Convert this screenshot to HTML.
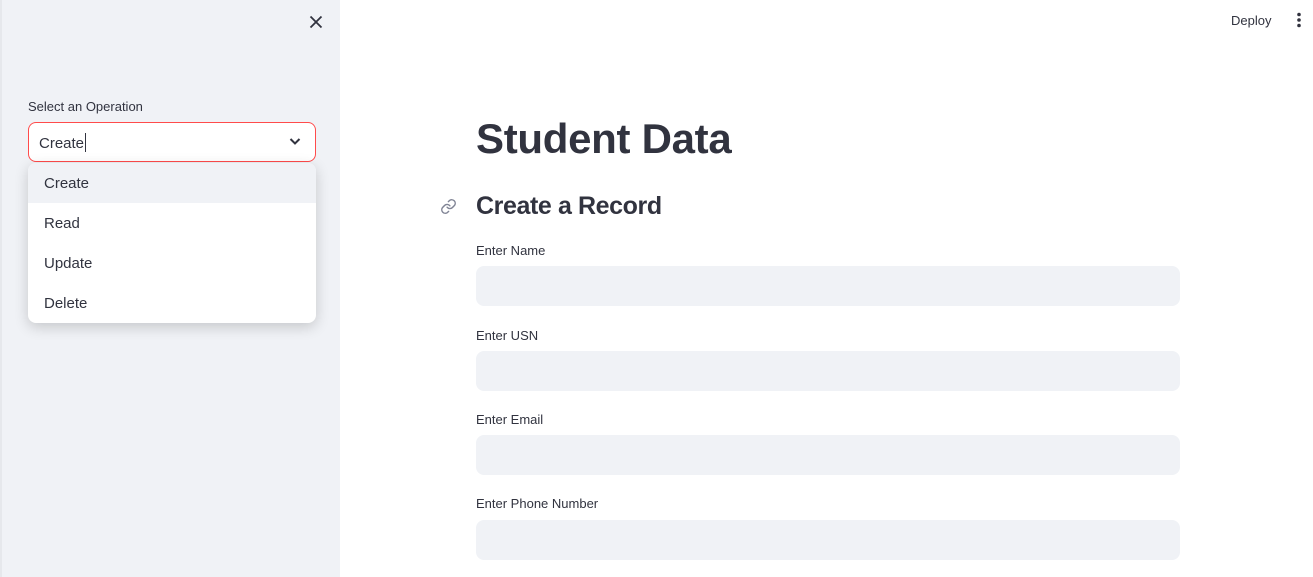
<!DOCTYPE html>
<html><head><style>
*{margin:0;padding:0;box-sizing:border-box}
body{width:1313px;height:577px;overflow:hidden;background:#fff;font-family:"Liberation Sans",sans-serif;color:#31333f;position:relative}
.sb{position:absolute;left:0;top:0;width:340px;height:577px;background:#f0f2f6;border-left:2px solid #e6e8ec}
.abs{position:absolute}
.lbl{font-size:13px;color:#31333f}
.inp{position:absolute;left:476px;width:704px;height:40px;background:#f0f2f6;border-radius:8px}
.menu{position:absolute;left:28px;top:163px;width:288px;height:160px;background:#fff;border-radius:8px;box-shadow:0 4px 14px rgba(0,0,0,.18);overflow:hidden}
.menu div{height:40px;line-height:40px;padding-left:16px;font-size:15px}
</style></head><body>
<div class="sb"></div>
<svg class="abs" style="left:309px;top:15px" width="14" height="14" viewBox="0 0 14 14"><path d="M1.5 1.5L12.5 12.5M12.5 1.5L1.5 12.5" stroke="#31333f" stroke-width="1.8"/></svg>
<div class="abs lbl" style="left:28px;top:99px">Select an Operation</div>
<div class="abs" style="left:28px;top:122px;width:288px;height:40px;border:1px solid #ff4b4b;border-radius:8px;background:#fff"></div>
<div class="abs" style="left:39px;top:133px;font-size:15px">Create<span style="display:inline-block;width:1px;height:19px;background:#31333f;vertical-align:-4px;margin-left:1px"></span></div>
<svg class="abs" style="left:289px;top:137px" width="12" height="9" viewBox="0 0 12 9"><path d="M1.5 2L6 6.5L10.5 2" stroke="#31333f" stroke-width="2" fill="none"/></svg>
<div class="menu"><div style="background:#f0f2f6;line-height:41px">Create</div><div style="line-height:41px">Read</div><div style="line-height:41px">Update</div><div style="line-height:41px">Delete</div></div>
<div class="abs" style="left:1231px;top:13px;font-size:13px">Deploy</div>
<svg class="abs" style="left:1296px;top:12px" width="6" height="16"><circle cx="3" cy="2.5" r="1.8" fill="#31333f"/><circle cx="3" cy="8" r="1.8" fill="#31333f"/><circle cx="3" cy="13.5" r="1.8" fill="#31333f"/></svg>
<div class="abs" style="left:476px;top:115px;font-size:42px;font-weight:bold;letter-spacing:-0.3px">Student Data</div>
<svg class="abs" style="left:440px;top:198px" width="17" height="17" viewBox="0 0 24 24" fill="none" stroke="#808495" stroke-width="2" stroke-linecap="round"><path d="M10 13a5 5 0 0 0 7.5.5l3-3a5 5 0 0 0-7-7l-1.7 1.7"/><path d="M14 11a5 5 0 0 0-7.5-.5l-3 3a5 5 0 0 0 7 7l1.7-1.7"/></svg>
<div class="abs" style="left:476px;top:192px;font-size:25px;font-weight:600;letter-spacing:-0.4px">Create a Record</div>
<div class="abs lbl" style="left:476px;top:243px">Enter Name</div>
<div class="inp" style="top:266px"></div>
<div class="abs lbl" style="left:476px;top:328px">Enter USN</div>
<div class="inp" style="top:351px"></div>
<div class="abs lbl" style="left:476px;top:412px">Enter Email</div>
<div class="inp" style="top:435px"></div>
<div class="abs lbl" style="left:476px;top:496px">Enter Phone Number</div>
<div class="inp" style="top:520px"></div>
</body></html>
